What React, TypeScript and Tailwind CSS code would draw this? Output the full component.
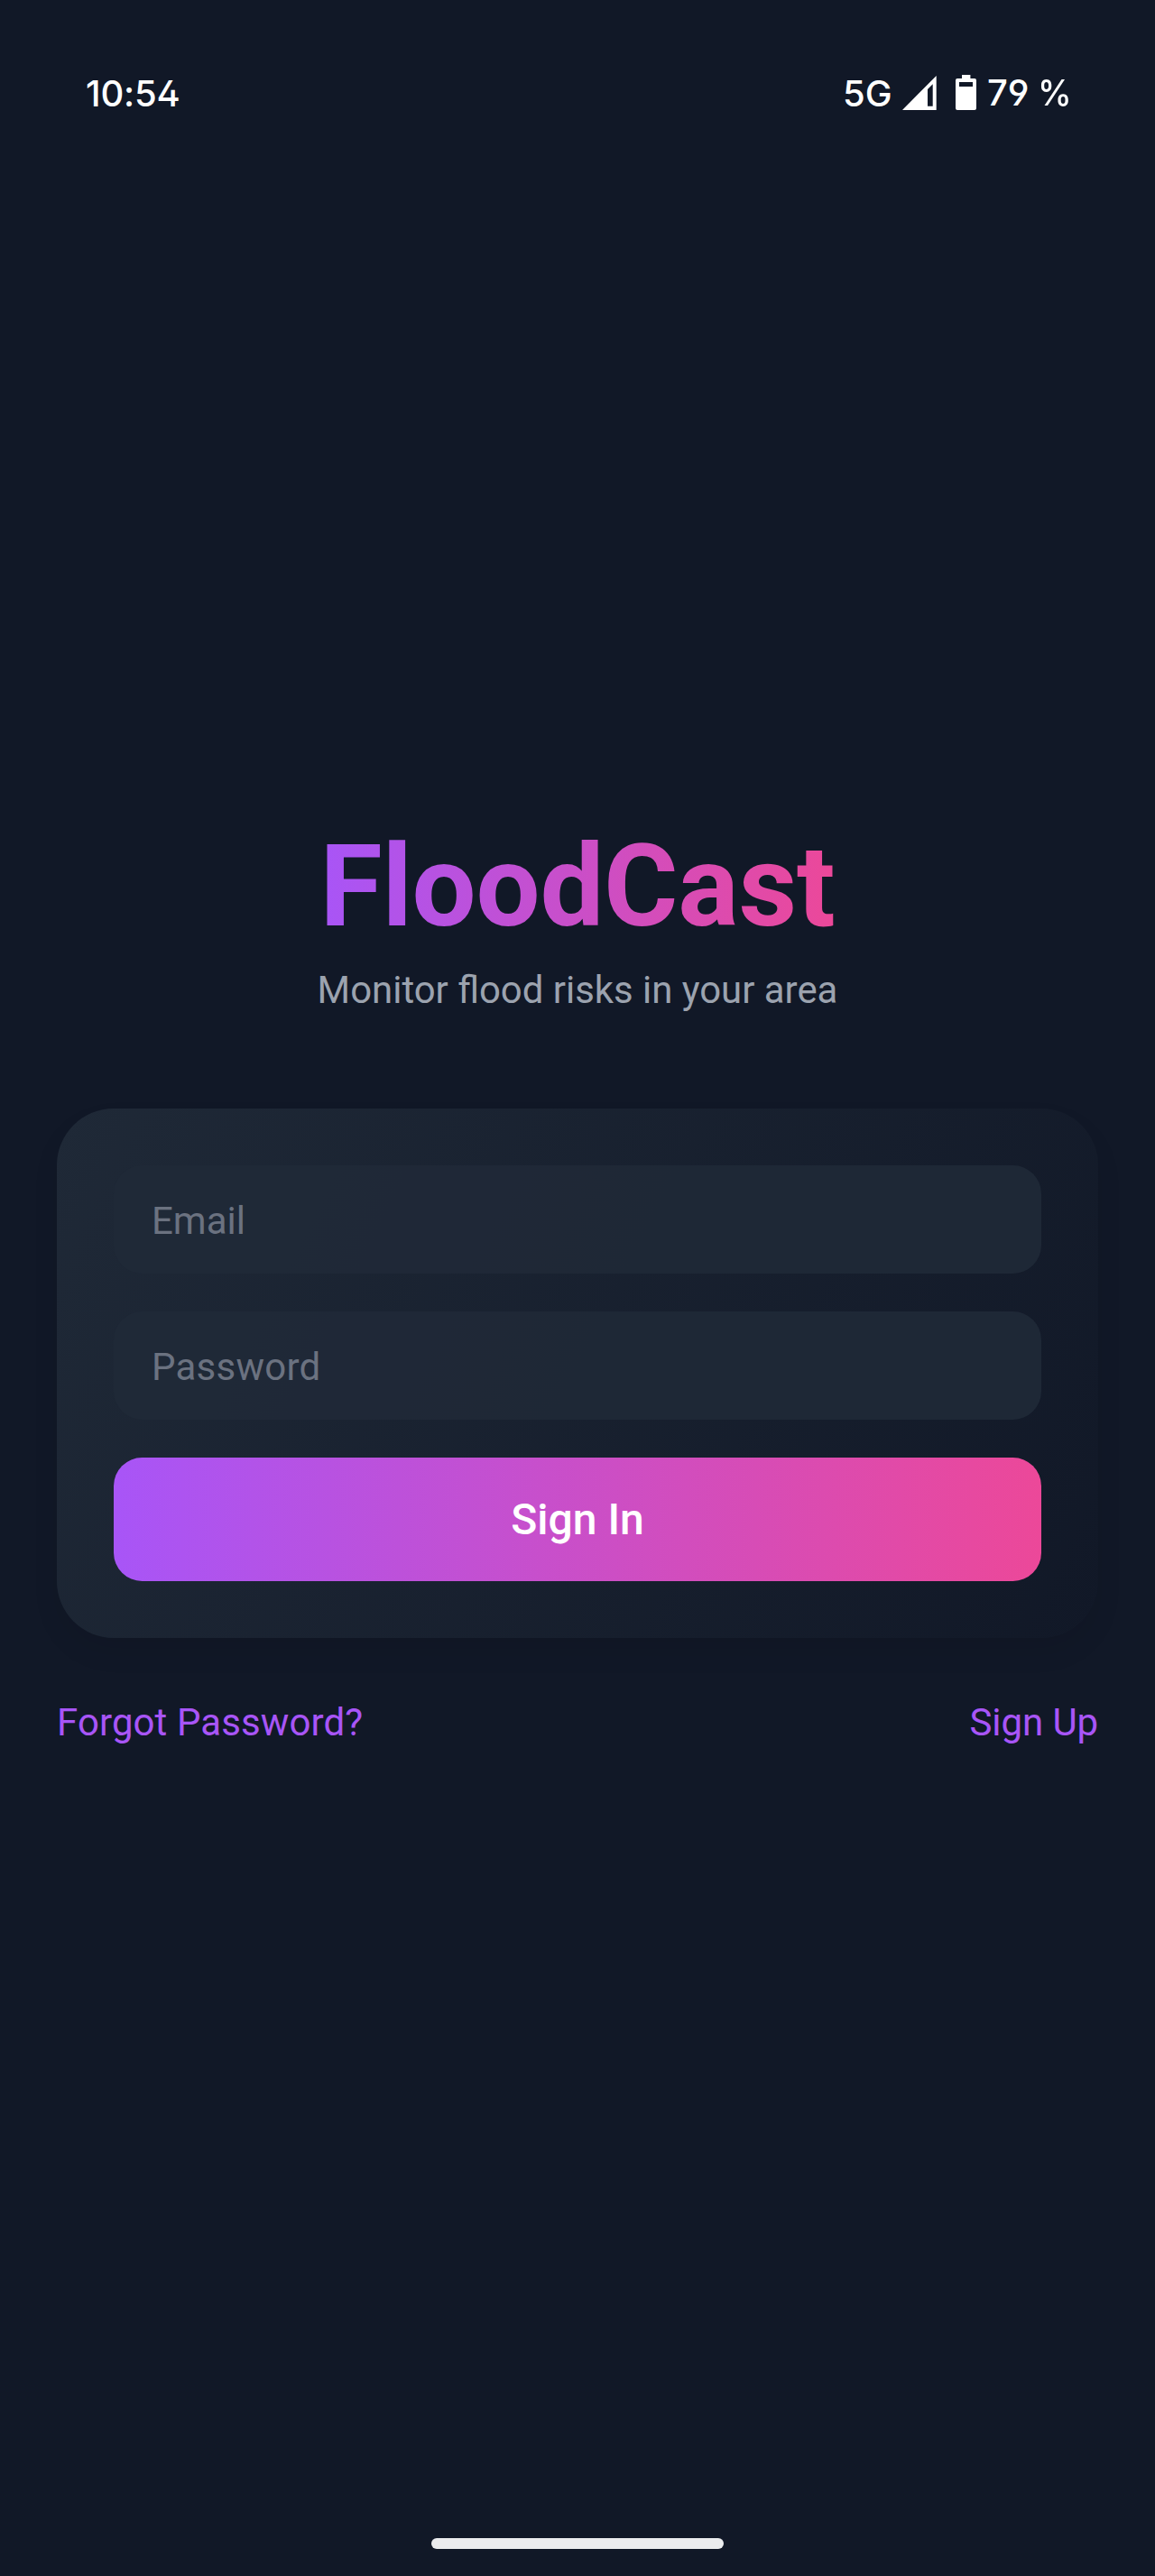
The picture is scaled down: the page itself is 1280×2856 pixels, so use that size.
function StatusBar() {
  return (
    <header className="flex h-[206px] shrink-0 items-start justify-between pt-[79px] pr-[92px] pl-[95px] font-['Inter',sans-serif] text-[40px] leading-[49px] text-white [font-feature-settings:'ss01','cv09'_0]">
      <span className="font-[550] tracking-[-0.2px]">10:54</span>
      <div className="flex items-start font-[480]">
        <span className="w-[66px]">5G</span>
        <svg className="mt-[5px] h-[38px] w-[38px]" viewBox="0 0 38 38" fill="white">
          <path fillRule="evenodd" d="M0 38 37.7 0V38ZM28 15V33.7H33.7V9.3Z" />
        </svg>
        <svg className="mt-1 ml-[21px] h-[39px] w-[23px]" viewBox="0 0 23 39" fill="white">
          <path
            fillRule="evenodd"
            d="M7 0h9.4v4H21a2 2 0 0 1 2 2v31a2 2 0 0 1-2 2H2a2 2 0 0 1-2-2V6a2 2 0 0 1 2-2h5ZM4 8v5h15V8Z"
          />
        </svg>
        <span className="-mt-px ml-3 w-[94px] whitespace-nowrap [word-spacing:-3.5px]">
          79 <span className="inline-block origin-right scale-x-95">%</span>
        </span>
      </div>
    </header>
  );
}

const inputClass =
  "h-[120px] w-full rounded-[31.5px] bg-[rgba(32,41,55,0.92)] px-[42px] text-[42px] leading-[123px] text-[#6b7280]";

export default function App() {
  return (
    <div className="flex h-[2856px] w-[1280px] flex-col overflow-hidden bg-[#111827] font-['Roboto',sans-serif]">
      <StatusBar />
      <main className="flex flex-1 flex-col px-[63px] pt-[702px]">
        <h1 className="mx-auto bg-linear-to-r/srgb from-[#a855f7] to-[#ec4899] bg-clip-text text-[126px] leading-[150px] font-bold tracking-[-0.2px] text-transparent">
          FloodCast
        </h1>
        <p className="mt-2 text-center text-[41.9px] leading-[63px] text-[#9ca3af]">
          Monitor flood risks in your area
        </p>
        <section className="mt-[100px] flex flex-col gap-[42px] rounded-[63px] bg-[linear-gradient(117deg,#1f2937,#111827)] p-[63px] shadow-[0_16px_30px_rgba(0,0,0,0.07)]">
          <div className={inputClass}>Email</div>
          <div className={inputClass + " tracking-[0.25px]"}>Password</div>
          <button className="h-[137px] rounded-[31.5px] bg-linear-to-r/srgb from-[#a855f7] to-[#ec4899] text-[48px] leading-[57px] font-medium text-white">
            Sign In
          </button>
        </section>
        <nav className="mt-[62px] flex justify-between text-[42px] leading-[63px] text-[#a855f7]">
          <a className="tracking-[0.1px]">Forgot Password?</a>
          <a className="tracking-[-0.1px]">Sign Up</a>
        </nav>
      </main>
      <div className="mx-auto mb-[30px] h-3 w-[324px] shrink-0 rounded-full bg-[#ebecee]" />
    </div>
  );
}
